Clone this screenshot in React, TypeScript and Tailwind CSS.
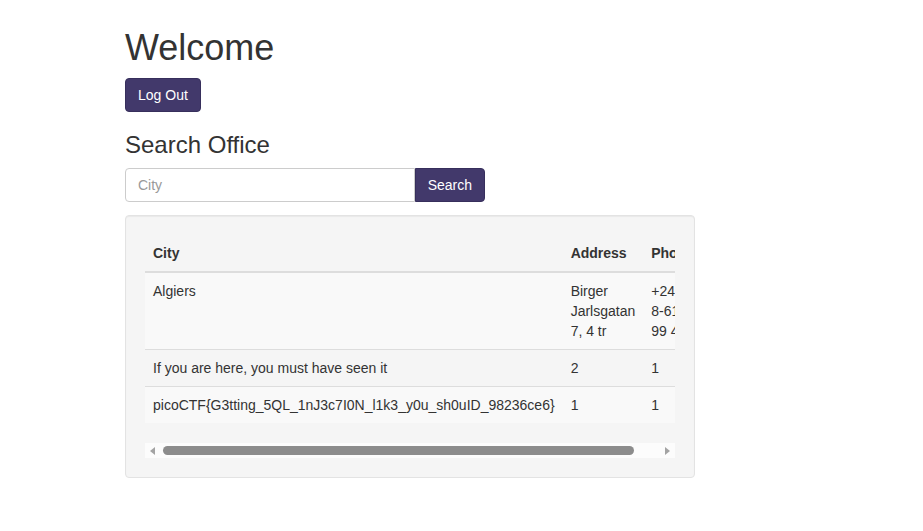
import React from 'react';

const offices = [
    { city: 'Algiers', address: 'Birger Jarlsgatan 7, 4 tr', phone: '+246 8-615 99 44' },
    { city: 'If you are here, you must have seen it', address: '2', phone: '1' },
    { city: 'picoCTF{G3tting_5QL_1nJ3c7I0N_l1k3_y0u_sh0uID_98236ce6}', address: '1', phone: '1' },
];

export default function App() {
    return (
        <div className="min-h-[531px] bg-white font-['Liberation_Sans',Arial,sans-serif] text-[14px] leading-[20px] text-[#333]">
            <div className="pl-[125px] pt-[28px] w-[695px]">
                {/* Header */}
                <h1 className="text-[36px] leading-[39.6px] mb-[10px]">Welcome</h1>
                <button className="h-[34px] px-3 rounded bg-[#42396b] border border-[#372f5c] text-white">
                    Log Out
                </button>

                <h3 className="mt-5 mb-[10px] text-[24px] leading-[26.4px]">Search Office</h3>

                {/* Search form */}
                <div className="flex w-[360px] mb-[13px]">
                    <input
                        type="text"
                        placeholder="City"
                        className="flex-1 min-w-0 h-[34px] px-3 border border-[#ccc] rounded-l bg-white placeholder:text-[#999] outline-none"
                    />
                    <button className="h-[34px] px-3 rounded-r bg-[#42396b] border border-[#372f5c] text-white">
                        Search
                    </button>
                </div>

                {/* Results */}
                <div className="p-[19px] bg-[#f5f5f5] border border-[#e3e3e3] rounded shadow-[inset_0_1px_1px_rgba(0,0,0,0.05)]">
                    <div className="overflow-hidden">
                        <table className="w-full mb-5 border-collapse text-left">
                            <thead>
                                <tr>
                                    <th className="p-2 font-bold align-bottom border-b-2 border-[#ddd]">City</th>
                                    <th className="p-2 font-bold align-bottom border-b-2 border-[#ddd]">Address</th>
                                    <th className="p-2 font-bold align-bottom border-b-2 border-[#ddd]">Phone</th>
                                </tr>
                            </thead>
                            <tbody>
                                {offices.map((o, i) => (
                                    <tr key={i} className={i % 2 === 0 ? 'bg-[#f9f9f9]' : ''}>
                                        <td className="p-2 align-top border-t border-[#ddd]">{o.city}</td>
                                        <td className="p-2 align-top border-t border-[#ddd]">{o.address}</td>
                                        <td className="p-2 align-top border-t border-[#ddd]">{o.phone}</td>
                                    </tr>
                                ))}
                            </tbody>
                        </table>
                    </div>

                    {/* Horizontal scrollbar */}
                    <div className="flex items-center h-[15px] bg-[#fcfcfc]">
                        <div className="w-[15px] h-full flex items-center justify-center">
                            <div className="w-0 h-0 border-y-[4px] border-y-transparent border-r-[5px] border-r-[#a3a3a3]" />
                        </div>
                        <div className="ml-[3px] w-[471px] h-[9px] rounded-full bg-[#8c8c8c]" />
                        <div className="flex-1" />
                        <div className="w-[15px] h-full flex items-center justify-center">
                            <div className="w-0 h-0 border-y-[4px] border-y-transparent border-l-[5px] border-l-[#a3a3a3]" />
                        </div>
                    </div>
                </div>
            </div>
        </div>
    );
}
